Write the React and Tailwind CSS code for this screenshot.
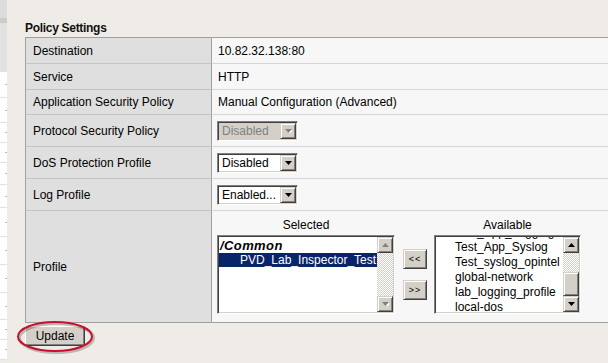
import React from "react";

function Arrow({ dir = "down", disabled = false }) {
  const pts = dir === "down" ? "0,0 7,0 3.5,4" : "3.5,0 7,4 0,4";
  return (
    <svg width="7" height="4" viewBox="0 0 7 4" className="block">
      {disabled && <polygon points={pts} fill="#ffffff" transform="translate(1,1)" />}
      <polygon points={pts} fill={disabled ? "#808080" : "#000000"} />
    </svg>
  );
}

function RaisedBox({ children, className = "" }) {
  return (
    <div
      className={`flex items-center justify-center bg-[#d4d0c8] border border-t-[#d4d0c8] border-l-[#d4d0c8] border-r-[#404040] border-b-[#404040] shadow-[inset_1px_1px_0_#ffffff,inset_-1px_-1px_0_#808080] ${className}`}
    >
      {children}
    </div>
  );
}

function Select({ label, disabled = false }) {
  return (
    <div
      className={`flex items-center w-[81px] h-[20px] border border-t-[#808080] border-l-[#808080] border-r-[#ffffff] border-b-[#ffffff] shadow-[inset_1px_1px_0_#404040,inset_-1px_-1px_0_#d4d0c8] p-[1px] ${
        disabled ? "bg-[#d4d0c8] text-[#808080]" : "bg-white text-black"
      }`}
    >
      <div className="flex-1 pl-[3px] text-[12px] leading-[16px] whitespace-nowrap overflow-hidden">{label}</div>
      <RaisedBox className="w-[16px] h-[16px] shrink-0">
        <Arrow dir="down" disabled={disabled} />
      </RaisedBox>
    </div>
  );
}

function Sunken({ children, className = "" }) {
  return (
    <div
      className={`flex bg-white border border-t-[#808080] border-l-[#808080] border-r-[#ffffff] border-b-[#ffffff] shadow-[inset_1px_1px_0_#404040,inset_-1px_-1px_0_#d4d0c8] p-[1px] ${className}`}
    >
      {children}
    </div>
  );
}

const checker =
  "bg-[image:repeating-conic-gradient(#d4d0c8_0_25%,#ffffff_0_50%)] bg-[length:2px_2px]";

function LabelCell({ children, first = false }) {
  return (
    <div
      className={`flex items-center pl-[7px] bg-[#dfdfdf] border-r border-r-[#a0a0a0] ${
        first ? "" : "border-t border-t-[#c4c4c4]"
      }`}
    >
      {children}
    </div>
  );
}

function ValueCell({ children, first = false, pl = "pl-[6px]" }) {
  return (
    <div
      className={`flex items-center ${pl} bg-[#f7f7f7] ${first ? "" : "border-t border-t-[#d6d6d6]"}`}
    >
      {children}
    </div>
  );
}

function Row({ h, label, children, first = false, pl }) {
  return (
    <div className={`grid grid-cols-[186px_1fr] ${h}`}>
      <LabelCell first={first}>{label}</LabelCell>
      <ValueCell first={first} pl={pl}>
        {children}
      </ValueCell>
    </div>
  );
}

function LeftStrip() {
  const rows = [26, 25, 20, 20, 22, 23, 29, 28, 28, 27, 20, 20];
  return (
    <div className="w-[7px] shrink-0 flex flex-col h-full overflow-hidden">
      <div className="h-[18px] bg-[#dcdcdc] shrink-0" />
      <div className="h-[5px] bg-[#cfccc6] shrink-0" />
      <div className="h-[49px] bg-[#e2e2e2] shrink-0" />
      {rows.map((r, i) => (
        <div
          key={i}
          style={{ height: r }}
          className="shrink-0 bg-white border-b border-b-[#e2e2e2] flex items-center justify-end"
        >
          <div className="w-[2px] h-[1px] bg-[#b8b8b8]" />
        </div>
      ))}
    </div>
  );
}

export default function App() {
  return (
    <div className="w-[608px] h-[363px] bg-[#efece7] flex overflow-hidden relative font-['Liberation_Sans',Arial,sans-serif] text-[12px] text-black">
      <LeftStrip />
      <div className="flex-1 pl-[18px] pt-[21px] overflow-hidden">
        <div className="h-[14px] leading-[14px] font-bold text-[12px] tracking-[-0.3px] mb-[2px] text-[#111]">
          Policy Settings
        </div>
        <div className="w-[600px] border-t border-b border-l border-[#a0a0a0] leading-[14px]">
          <Row h="h-[25px]" label="Destination" first>
            10.82.32.138:80
          </Row>
          <Row h="h-[26px]" label="Service">
            HTTP
          </Row>
          <Row h="h-[25px]" label="Application Security Policy">
            Manual Configuration (Advanced)
          </Row>
          <Row h="h-[32px]" label="Protocol Security Policy" pl="pl-[5px]">
            <Select label="Disabled" disabled />
          </Row>
          <Row h="h-[32px]" label="DoS Protection Profile" pl="pl-[5px]">
            <Select label="Disabled" />
          </Row>
          <Row h="h-[32px]" label="Log Profile" pl="pl-[5px]">
            <Select label="Enabled..." />
          </Row>
          <div className="grid grid-cols-[186px_1fr] h-[112px]">
            <LabelCell>Profile</LabelCell>
            <div className="flex items-start pl-[5px] pt-[7px] bg-[#f7f7f7] border-t border-t-[#d6d6d6]">
              {/* Selected */}
              <div className="flex flex-col w-[178px]">
                <div className="h-[14px] leading-[14px] text-center mb-[3px]">Selected</div>
                <Sunken className="h-[79px] w-[178px]">
                  <div className="flex-1 overflow-hidden pt-[2px]">
                    <div className="h-[14px] leading-[14px] font-bold italic text-[13px] tracking-[0.4px] pl-[1px] whitespace-nowrap">
                      /Common
                    </div>
                    <div className="h-[14px] leading-[14px] bg-[#0a246a] text-white pl-[21px] whitespace-nowrap overflow-hidden">
                      PVD_Lab_Inspector_Test
                    </div>
                  </div>
                  <div className={`w-[16px] flex flex-col shrink-0 ${checker}`}>
                    <RaisedBox className="w-[16px] h-[16px]">
                      <Arrow dir="up" disabled />
                    </RaisedBox>
                    <div className="flex-1" />
                    <RaisedBox className="w-[16px] h-[16px]">
                      <Arrow dir="down" disabled />
                    </RaisedBox>
                  </div>
                </Sunken>
              </div>
              {/* Move buttons */}
              <div className="flex flex-col ml-[8px] mt-[31px] gap-[11px]">
                <RaisedBox className="w-[24px] h-[20px] text-[9px] tracking-[1px] leading-none">&lt;&lt;</RaisedBox>
                <RaisedBox className="w-[24px] h-[20px] text-[9px] tracking-[1px] leading-none">&gt;&gt;</RaisedBox>
              </div>
              {/* Available */}
              <div className="flex flex-col w-[147px] ml-[7px]">
                <div className="h-[14px] leading-[14px] text-center mb-[3px]">Available</div>
                <Sunken className="h-[79px] w-[147px]">
                  <div className="flex-1 overflow-hidden">
                    <div className="mt-[-12px] pl-[19px] leading-[15px] whitespace-nowrap">
                      <div className="h-[15px]">Test_App_Logging</div>
                      <div className="h-[15px]">Test_App_Syslog</div>
                      <div className="h-[15px]">Test_syslog_opintel</div>
                      <div className="h-[15px]">global-network</div>
                      <div className="h-[15px]">lab_logging_profile</div>
                      <div className="h-[15px]">local-dos</div>
                    </div>
                  </div>
                  <div className={`w-[16px] flex flex-col shrink-0 ${checker}`}>
                    <RaisedBox className="w-[16px] h-[16px]">
                      <Arrow dir="up" />
                    </RaisedBox>
                    <div className="h-[19px]" />
                    <RaisedBox className="w-[16px] h-[24px]" />
                    <div className="flex-1" />
                    <RaisedBox className="w-[16px] h-[16px]">
                      <Arrow dir="down" />
                    </RaisedBox>
                  </div>
                </Sunken>
              </div>
            </div>
          </div>
        </div>
        <div className="mt-[3px]">
          <div className="w-[60px] h-[20px] flex items-center justify-center bg-[#d4d0c8] border border-t-[#ffffff] border-l-[#ffffff] border-r-[#404040] border-b-[#404040] shadow-[inset_-1px_-1px_0_#808080] text-[12px]">
            Update
          </div>
        </div>
      </div>
      <svg
        className="absolute left-[15px] top-[319px] pointer-events-none"
        width="82"
        height="38"
        viewBox="0 0 82 38"
      >
        <ellipse cx="41.5" cy="19" rx="37" ry="14.5" fill="none" stroke="rgba(0,0,0,0.22)" strokeWidth="3" />
        <ellipse cx="40" cy="17.5" rx="37" ry="14.5" fill="none" stroke="#c8102e" strokeWidth="2" />
      </svg>
    </div>
  );
}
